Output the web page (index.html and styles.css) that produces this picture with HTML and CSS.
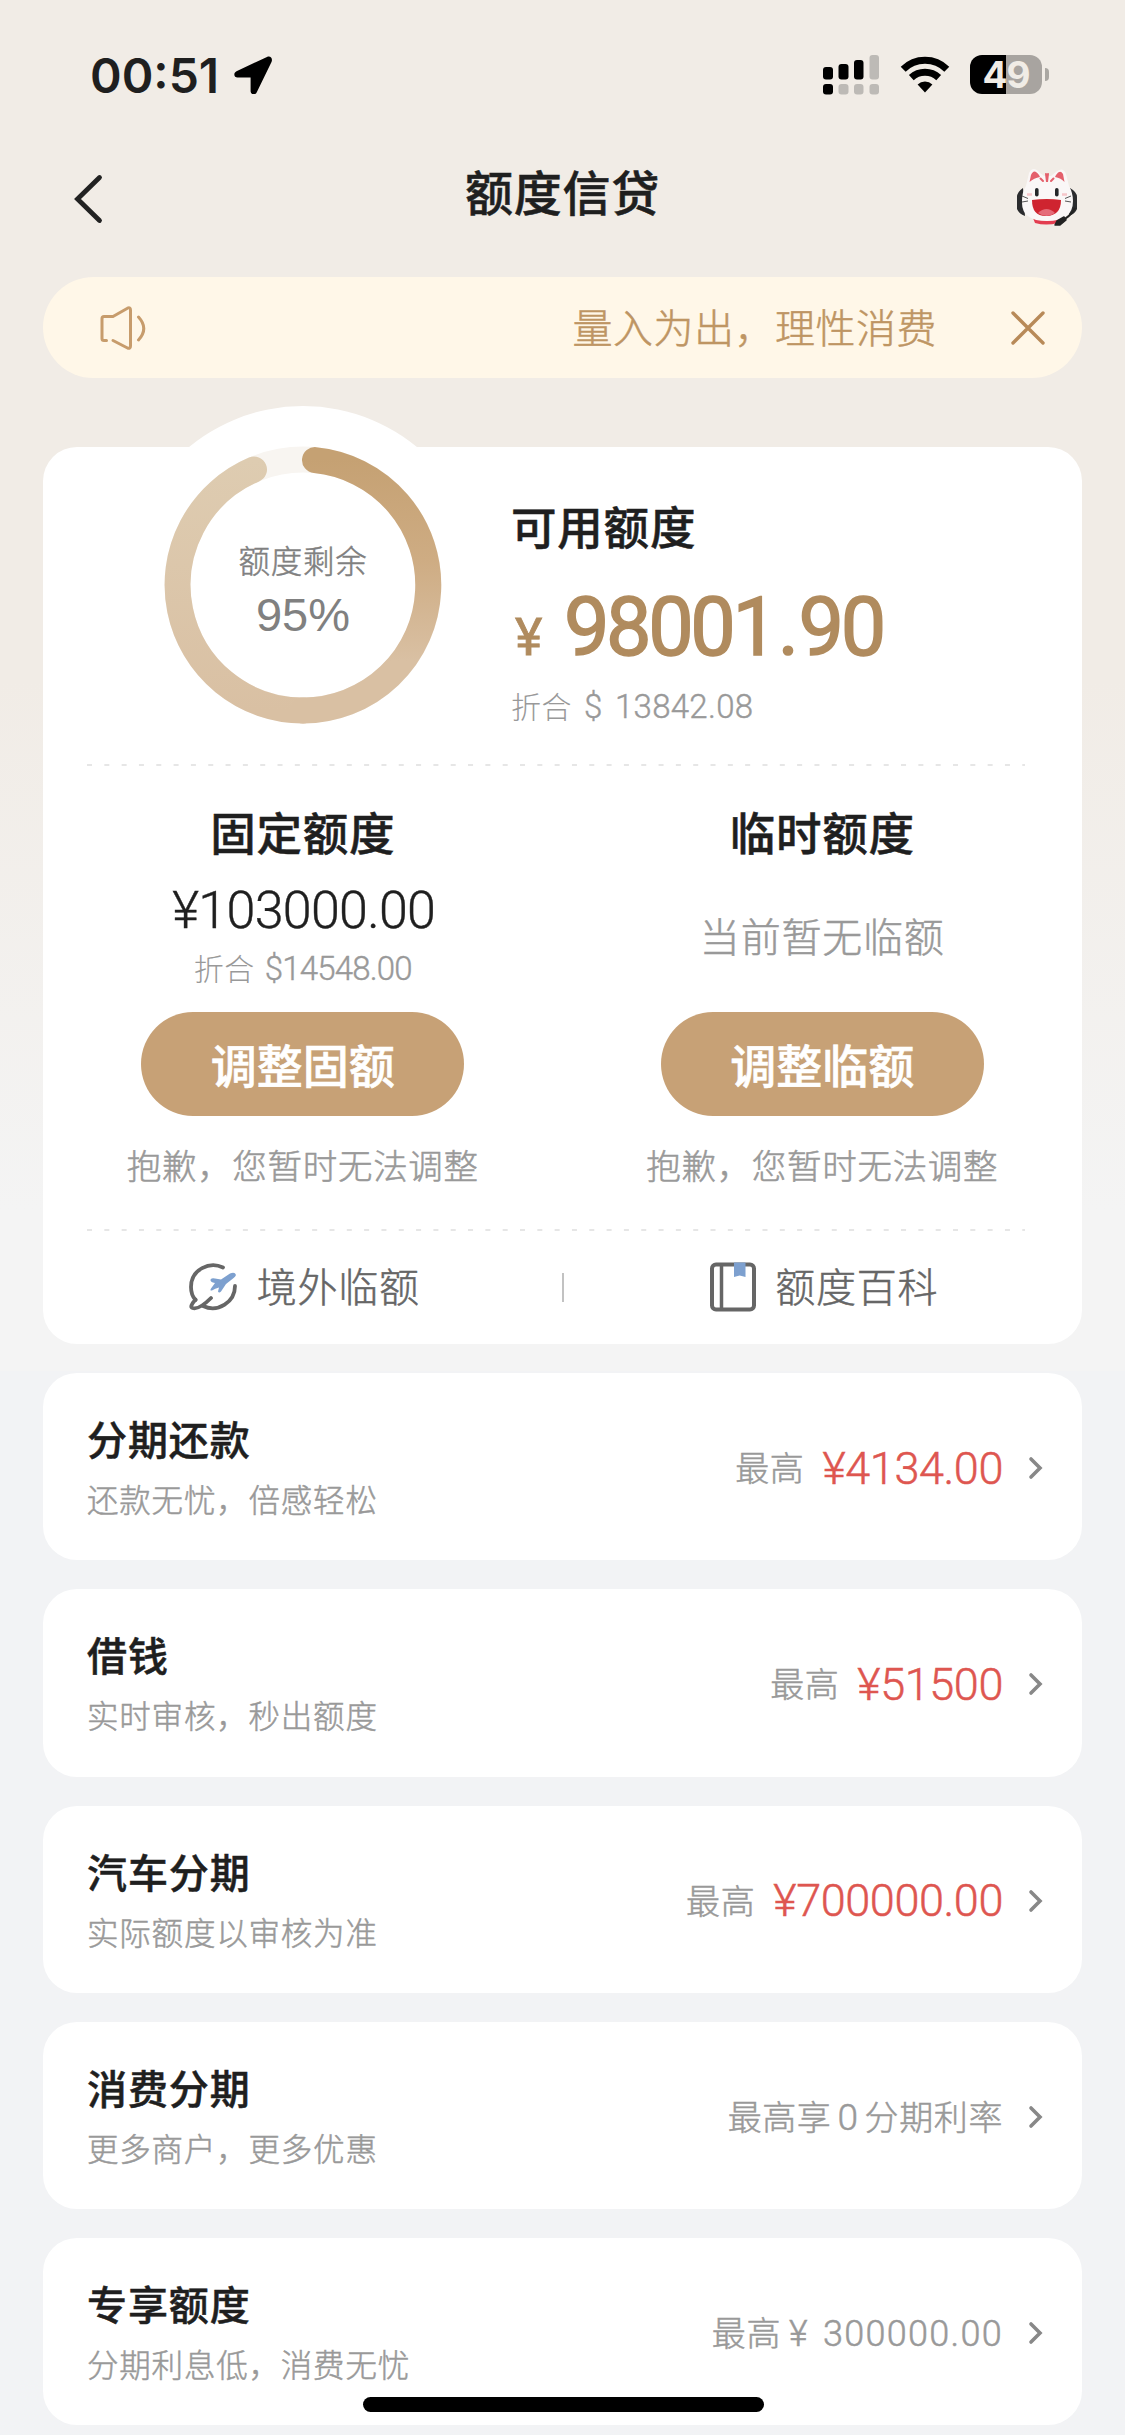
FILE: index.html
```html
<!DOCTYPE html>
<html lang="zh-CN">
<head>
<meta charset="utf-8">
<title>额度信贷</title>
<link rel="stylesheet" href="styles.css">
</head>
<body>
<div class="screen">
  <header class="status">
    <div class="status-left">
      <span class="clock">00:51</span>
      <svg class="locate" width="38" height="38" viewBox="0 0 38 38"><path d="M33 1 2.500 15.200C-1 17 0 21.600 3.500 21.600H16.600V35c0 4 5 4.600 6.300 1L37.500 6C39 2.500 36.500-.5 33 1Z"/></svg>
    </div>
    <div class="status-right">
      <svg width="57" height="40" viewBox="0 0 57 40">
        <g fill="#000"><rect x="0" y="12" width="10" height="12.500" rx="3"/><rect x="15.500" y="9" width="10" height="15.500" rx="3"/><rect x="31" y="5" width="9.500" height="19.500" rx="3"/><rect x="0" y="29" width="10" height="10.500" rx="3"/></g>
        <g fill="#bdbab6"><rect x="46.500" y="0" width="9.500" height="24.500" rx="3"/><rect x="15.500" y="29" width="10" height="10.500" rx="3"/><rect x="31" y="29" width="9.500" height="10.500" rx="3"/><rect x="46.500" y="29" width="9.500" height="10.500" rx="3"/></g>
      </svg>
      <svg class="wifi" width="50" height="40" viewBox="0 0 50 40"><g fill="none" stroke="#000" stroke-width="7"><path d="M3.200 14.200A31 31 0 0 1 46.800 14.200"/><path d="M11.300 22.600A20 20 0 0 1 38.700 22.600"/></g><path d="M17.600 29.500a10.800 10.800 0 0 1 14.800 0L25 37.500Z"/></svg>
      <div class="battery"><span class="level"><b>49</b></span><i class="tip"></i></div>
    </div>
  </header>

  <nav class="nav">
    <svg class="back" width="30" height="50" viewBox="0 0 30 50"><path d="M26.500 3.500 4.500 25 26.500 46.500" fill="none" stroke="#222" stroke-width="4.800" stroke-linecap="round" stroke-linejoin="miter"/></svg>
    <h1>额度信贷</h1>
    <svg class="mascot" width="64" height="60" viewBox="0 0 64 60">
      <path d="M18 50q14 5 27 0l-2 5q-12 3-23 0Z" fill="#e33d50"/>
      <path d="M8 20Q2 24 2 29v12q2 5 8 7ZM55 20q7 4 7 9v12q-2 5-8 7Z" fill="#2b2c2e"/>
      <path d="M11 18 14 5q4-8 11 0l4 3h7l5-4q7-6 10 2l3 12q4 7 4 15 0 20-26 20T7 33q0-9 4-15Z" fill="#faf7f7"/>
      <path d="M14.500 14 16 7q3-7 8 0l1 2q-6 1-10.500 5ZM49.500 14 48 6q-3-5-7 1l-1 2q6 1 9.500 5Z" fill="#e4606c"/>
      <path d="m31 6 1 8 1-8M25.500 10.500l2.500 2.500M38.500 10.500l-2.500 2.500" fill="none" stroke="#e4606c" stroke-width="2" stroke-linecap="round"/>
      <rect x="20" y="20" width="3.600" height="8.500" rx="1.800" fill="#24272a"/><rect x="40" y="20" width="3.600" height="8.500" rx="1.800" fill="#24272a"/>
      <path d="M7 28l6 2.500M7 34l6-1M56 28l-6 2.500M56 34l-6-1" stroke="#555" stroke-width="1"/>
      <path d="M12 26.500h5M47 26.500h5" stroke="#f6c6ca" stroke-width="2.500"/>
      <path d="M17 32q15-2 29 0 0 15.500-14.500 16T17 32Z" fill="#cf2430"/><path d="M23 45q8.500-8 17 0-8.500 6-17 0Z" fill="#e56b79"/>
      <path d="M60 40q-5 9-14 13" fill="none" stroke="#222" stroke-width="2"/><path d="m40 57 2-4 7-4 2 3-6 5Z" fill="#222" stroke="#222" stroke-width="1.500" stroke-linejoin="round"/>
    </svg>
  </nav>

  <div class="notice">
    <svg width="48" height="46" viewBox="0 0 48 46"><g fill="none" stroke="#c79c6c" stroke-width="3" stroke-linecap="round" stroke-linejoin="round"><path d="M7.500 35.500H5Q3 35.500 3 33.500V13.500Q3 11.500 5 11.500H14L28.500 3.200Q31.500 2 31.500 5V41Q31.500 44 28.500 43L14 35.500"/><path d="M39.500 12Q50 23.500 39.500 35"/></g></svg>
    <p>量入为出，理性消费</p>
    <svg class="close" width="34" height="34" viewBox="0 0 34 34"><path d="M2 2 32 32M32 2 2 32" stroke="#b88a58" stroke-width="3.400" stroke-linecap="round"/></svg>
  </div>

  <main>
    <section class="card summary">
      <div class="top">
        <div class="gauge">
          <svg width="358" height="358" viewBox="0 0 358 358">
            <defs>
              <linearGradient id="right" x1="0" y1="53" x2="0" y2="305" gradientUnits="userSpaceOnUse"><stop offset="0" stop-color="#c5a173"/><stop offset=".4" stop-color="#ceac83"/><stop offset=".8" stop-color="#d9c0a3"/></linearGradient>
              <linearGradient id="left" x1="0" y1="53" x2="0" y2="305" gradientUnits="userSpaceOnUse"><stop offset="0" stop-color="#deccb1"/><stop offset="1" stop-color="#d9c0a3"/></linearGradient>
            </defs>
            <circle cx="179" cy="179" r="179" fill="#fff"/>
            <g fill="none" stroke-width="26">
              <circle cx="179" cy="179" r="125.500" stroke="#f8f5f1"/>
              <g stroke-linecap="round"><path d="M179 304.500A125.500 125.500 0 0 1 130 63.500" stroke="url(#left)"/><path d="M191 54.100A125.500 125.500 0 0 1 179 304.500" stroke="url(#right)"/></g>
            </g>
          </svg>
          <div class="gauge-text"><span>额度剩余</span><b>95%</b></div>
        </div>
        <div class="available">
          <h2>可用额度</h2>
          <div class="amount num"><small>¥</small><strong>98001<i>.</i>90</strong></div>
          <div class="convert"><span>折合</span><span class="num usd">$ 13842.08</span></div>
        </div>
      </div>
      <svg class="dash" width="941" height="2"><path d="M0 1H938" stroke="#e6e6e6" stroke-width="2" stroke-dasharray="5 12.320"/></svg>
      <div class="limits">
        <div class="limit">
          <h2>固定额度</h2>
          <div class="fixed num">¥103000.00</div>
          <div class="convert fixed-usd"><span>折合</span><span class="num usd">$14548.00</span></div>
          <button>调整固额</button>
          <p>抱歉，您暂时无法调整</p>
        </div>
        <div class="limit">
          <h2>临时额度</h2>
          <div class="none">当前暂无临额</div>
          <button>调整临额</button>
          <p>抱歉，您暂时无法调整</p>
        </div>
      </div>
      <svg class="dash" width="941" height="2"><path d="M0 1H938" stroke="#e6e6e6" stroke-width="2" stroke-dasharray="5 12.320"/></svg>
      <div class="links">
        <a><svg width="50" height="50" viewBox="0 0 50 50"><g fill="none" stroke="#666" stroke-width="3.800" stroke-linecap="round"><path d="M35 5.500C22-1 3 7 3 25q0 8 4.500 13M47 24C47 40 30 51 15 44"/><path d="M7.500 37.500Q1 45 4.500 46 11 48 23 36"/></g><path d="M22.500 17.500Q24 15.500 27 16.500L33 17.500 42 11.500Q47 9.500 48 13 47.500 14.500 45 16.500L38 22 33 29.500Q31 31.500 30 29.500L31 25.500Q27 26.500 24 28.500 21.500 29 23 26.500L27 21Q22 20 22.500 17.500Z" fill="#7da0cf"/></svg><span>境外临额</span></a>
        <i></i>
        <a><svg width="46" height="50" viewBox="0 0 46 50"><rect x="2" y="2.500" width="42" height="45" rx="4" fill="none" stroke="#666" stroke-width="4"/><path d="M11.500 3V47" stroke="#666" stroke-width="3.500"/><path d="M24 .500H35.500V15L29.700 13.500 24 15Z" fill="#7da0cf"/></svg><span>额度百科</span></a>
      </div>
    </section>

    <section class="card row"><div><h3>分期还款</h3><p>还款无忧，倍感轻松</p></div><div class="value"><span>最高</span><b class="num">¥4134.00</b><svg width="16" height="24" viewBox="0 0 16 24"><path d="M3 3 12 12 3 21"/></svg></div></section>
    <section class="card row"><div><h3>借钱</h3><p>实时审核，秒出额度</p></div><div class="value"><span>最高</span><b class="num">¥51500</b><svg width="16" height="24" viewBox="0 0 16 24"><path d="M3 3 12 12 3 21"/></svg></div></section>
    <section class="card row"><div><h3>汽车分期</h3><p>实际额度以审核为准</p></div><div class="value"><span>最高</span><b class="num">¥700000.00</b><svg width="16" height="24" viewBox="0 0 16 24"><path d="M3 3 12 12 3 21"/></svg></div></section>
    <section class="card row"><div><h3>消费分期</h3><p>更多商户，更多优惠</p></div><div class="value"><span>最高享<em class="zero">0</em>分期利率</span><svg width="16" height="24" viewBox="0 0 16 24"><path d="M3 3 12 12 3 21"/></svg></div></section>
    <section class="card row"><div><h3>专享额度</h3><p>分期利息低，消费无忧</p></div><div class="value"><span>最高<em class="plain">¥ 300000.00</em></span><svg width="16" height="24" viewBox="0 0 16 24"><path d="M3 3 12 12 3 21"/></svg></div></section>
  </main>
  <div class="home"></div>
</div>
</body>
</html>
```
FILE: styles.css
```css
* { box-sizing: border-box; }
body, h1, h2, h3, p { margin: 0; }
body {
  background: #f2f3f5;
  color: #1f1f1f;
  font-family: "Noto Sans CJK SC", sans-serif;
}
svg { display: block; flex: none; }
em, i { font-style: normal; }
.screen {
  position: relative;
  width: 1125px;
  height: 2435px;
  overflow: hidden;
  background: linear-gradient(#f1ece6 0, #f1ece6 680px, #f4f4f4 1210px, #f4f4f4 1371px, #f2f3f5 1371px);
}
.num { font-family: Roboto, "Noto Sans CJK SC", sans-serif; }

.status {
  display: flex;
  justify-content: space-between;
  height: 148px;
  padding: 55px 76px 0 90px;
}
.status-left, .status-right { display: flex; align-items: flex-start; }
.clock { width: 144px; font: 600 48px/42px Inter, sans-serif; letter-spacing: 0; }
.locate { margin-top: 1px; }
.wifi { margin: 0 20px 0 20px; }
.battery { display: flex; align-items: center; gap: 3px; height: 39px; }
.level {
  width: 72px;
  height: 39px;
  border-radius: 12px;
  background: linear-gradient(90deg, #000 50%, #a8a4a0 50%);
  color: #f0ece6;
  text-align: center;
}
.level b { font: 700 37px/39px Inter, sans-serif; letter-spacing: -1px; }
.tip { width: 4px; height: 13px; border-radius: 0 5px 5px 0; background: #aaa7a2; }

.nav {
  display: grid;
  grid-template-columns: 100px 1fr 100px;
  height: 129px;
  padding: 0 40px 0 73px;
}
.nav h1 { margin: 6px 0 0 -33px; font-size: 48px; line-height: 72px; font-weight: 500; letter-spacing: 0.8px; text-align: center; -webkit-text-stroke: 0.5px #1f1f1f; }
.back { margin-top: 26px; }
.mascot { margin: 20px 0 0 30px; }
main { padding: 0 43px; }

.notice {
  display: flex;
  align-items: center;
  height: 101px;
  margin: 0 43px 69px;
  padding: 0 37px 0 56px;
  border-radius: 51px;
  background: #fff7e8;
  color: #be9563;
}
.notice p { flex: 1; padding: 0 74px 3px 0; text-align: right; font-size: 40px; line-height: 60px; font-weight: 300; letter-spacing: 0.5px; }
.notice p, .gauge-text span, .none, .limit p, .links a, .row p, .value > span { -webkit-text-stroke: 0.5px currentColor; }

.card { border-radius: 34px; background: #fff; }
.summary { height: 897px; }
.top { display: flex; height: 317px; }
.gauge { position: relative; width: 358px; height: 358px; margin: -41px 0 0 81px; }
.gauge-text {
  position: absolute;
  inset: 130px 0 auto;
  display: flex;
  flex-direction: column;
  align-items: center;
  color: #808080;
}
.gauge-text span { font-size: 31.500px; line-height: 46px; letter-spacing: 0.800px; font-weight: 300; }
.gauge-text b { margin-top: 3px; font: 400 47px/60px "Liberation Sans", sans-serif; }
.available { padding: 44px 0 0 29px; }
h2 { font-size: 45.500px; line-height: 68px; font-weight: 500; letter-spacing: 0.800px; -webkit-text-stroke: 0.5px #1f1f1f; }
.amount { display: flex; align-items: baseline; height: 98px; margin-top: 20px; padding-left: 4px; color: #b08b5e; }
.amount small { width: 49px; font-size: 52px; font-weight: 400; -webkit-text-stroke: 0.8px #b08b5e; }
.amount strong { font-size: 81px; line-height: 98px; font-weight: 400; letter-spacing: -3.400px; -webkit-text-stroke: 1.500px #b08b5e; }
.amount i { margin: 0 3px 0 3px; }
.convert { display: flex; align-items: baseline; color: #999; font-size: 30px; line-height: 44px; font-weight: 300; }
.convert span:first-child { letter-spacing: 0.5px; }
.available .convert { margin-top: 6px; }
.usd { margin-left: 12px; font-size: 33px; font-weight: 300; white-space: pre; -webkit-text-stroke: 0.4px #999; }
.available .usd { letter-spacing: 0.300px; word-spacing: 4px; }
.dash { margin-left: 44px; }

.limits { display: flex; height: 463px; }
.limit { display: flex; flex-direction: column; align-items: center; width: 520px; padding-top: 31px; }
.fixed { margin-top: 20px; font-size: 52px; line-height: 52px; font-weight: 300; letter-spacing: -0.700px; padding-left: 2px; -webkit-text-stroke: 0.4px #1f1f1f; }
.fixed-usd { height: 44px; margin-top: 8px; }
.fixed-usd .usd { margin-left: 10px; letter-spacing: -0.800px; }
.none { height: 60px; margin-top: 40px; color: #999; font-size: 40px; line-height: 60px; font-weight: 300; letter-spacing: 0.800px; }
.limit button {
  width: 323px;
  height: 104px;
  margin-top: 23px;
  padding: 0 0 3px;
  border: 0;
  border-radius: 52px;
  background: #c7a176;
  color: #fff;
  font: 500 46px/68px "Noto Sans CJK SC", sans-serif;
  -webkit-text-stroke: 0.6px #fff;
}
.none + button { margin-top: 47px; }
.limit p { margin-top: 23px; color: #999; font-size: 34.500px; line-height: 50px; font-weight: 300; letter-spacing: 0.700px; white-space: nowrap; }

.links { display: flex; align-items: center; height: 113px; }
.links a { display: flex; flex: 1; align-items: center; justify-content: center; gap: 19px; padding: 0 0 2px 3px; color: #666; font-size: 40px; line-height: 60px; font-weight: 300; letter-spacing: 0.700px; }
.links span { padding-bottom: 4px; }
.links i { width: 2px; height: 29px; background: #c2c2c2; }

.row { display: flex; justify-content: space-between; height: 187.300px; margin-top: 29px; padding: 35px 38px 0 44px; }
.row h3 { font-size: 40px; line-height: 60px; font-weight: 500; letter-spacing: 0.900px; -webkit-text-stroke: 0.5px #1f1f1f; }
.row p { margin-top: 6px; color: #999; font-size: 31.500px; line-height: 48px; font-weight: 300; letter-spacing: 0.800px; }
.value { display: flex; align-items: center; height: 60px; margin-top: 30px; color: #999; font-size: 34px; font-weight: 300; }
.value span { padding-bottom: 3px; letter-spacing: 0.600px; }
.value b { margin-left: 18px; color: #de5650; font-size: 45px; font-weight: 300; letter-spacing: -0.400px; -webkit-text-stroke: 0.5px #de5650; }
.value svg { margin-left: 25px; fill: none; stroke: #888; stroke-width: 3.600; stroke-linejoin: miter; stroke-linecap: round; }
.zero { margin: 0 6px; font-family: Roboto, sans-serif; font-size: 37px; }
.plain { margin-left: 8px; font-family: Roboto, sans-serif; font-size: 36px; letter-spacing: 1.300px; word-spacing: 4px; }
.home { position: absolute; left: 363px; top: 2397px; width: 401px; height: 15px; border-radius: 8px; background: #000; }
```
